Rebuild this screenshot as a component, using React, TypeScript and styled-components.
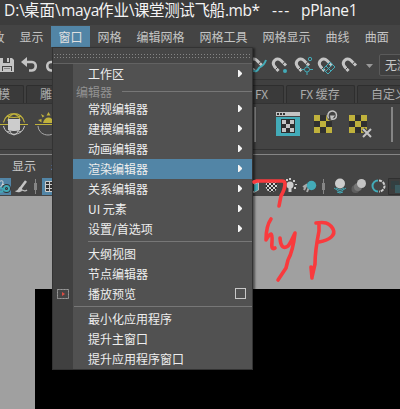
import React from "react";
import styled, { createGlobalStyle } from "styled-components";

const GlobalStyle = createGlobalStyle`
  * { box-sizing: border-box; }
  body { margin: 0; overflow: hidden; }
`;

const Window = styled.div`
  position: relative;
  width: 400px;
  height: 409px;
  overflow: hidden;
  background: #444;
  color: #c8c8c8;
  font: 12px/20px "Noto Sans CJK SC", sans-serif;
  white-space: pre;
  display: flex;
  flex-direction: column;
`;

const TitleBar = styled.header`
  height: 25px;
  flex: none;
  display: flex;
  padding-left: 4px;
  background: #3c3c3c;
  color: #f4f4f4;
  font: 15.5px/21px "Open Sans", "Noto Sans CJK SC", sans-serif;
`;

const TitlePart = styled.span<{ $w: number; $spacing?: number }>`
  width: ${(p) => p.$w}px;
  flex: none;
  letter-spacing: ${(p) => p.$spacing ?? 0}px;
`;

const MenuBar = styled.nav`
  height: 22px;
  flex: none;
  display: flex;
  padding-top: 1px;
  margin-left: -15px;
`;

const MenuBarItem = styled.span<{ $active?: boolean }>`
  flex: none;
  padding: 1px 7.5px 0;
  line-height: 20px;
  background: ${(p) => (p.$active ? "#5285a6" : "transparent")};
  color: ${(p) => (p.$active ? "#e0e0e0" : "#c4c4c4")};
`;

const Toolbar = styled.div`
  height: 33px;
  flex: none;
  display: flex;
  align-items: flex-start;
  padding-top: 10px;
  border-bottom: 1px solid #353535;
`;

const IconSlot = styled.span<{ $w: number; $gap?: number }>`
  display: block;
  flex: none;
  width: ${(p) => p.$w}px;
  margin-left: ${(p) => p.$gap ?? 0}px;
  svg { display: block; overflow: visible; }
`;

const SelectBox = styled.div`
  flex: none;
  width: 60px;
  height: 22px;
  margin: -3px 0 0 6px;
  padding-left: 5px;
  border: 1px solid #5a5a5a;
  border-radius: 2px;
  background: #3f3f3f;
  line-height: 20px;
`;

const TabRow = styled.div`
  height: 24px;
  flex: none;
  display: flex;
  align-items: flex-end;
  gap: 2px;
  margin-left: -4px;
  border-bottom: 1px solid #333;
  background: #404040;
`;

const Tab = styled.div<{ $w: number; $pad: number }>`
  flex: none;
  width: ${(p) => p.$w}px;
  height: 18px;
  padding-left: ${(p) => p.$pad}px;
  overflow: hidden;
  border: 1px solid #2e2e2e;
  border-bottom: 0;
  border-radius: 2px 2px 0 0;
  background: #3a3a3a;
  color: #aaa;
  line-height: 16px;
`;

const Shelf = styled.div`
  height: 46px;
  flex: none;
  display: flex;
  align-items: flex-start;
  padding: 8px 0 0 2px;
  border-bottom: 1px solid #333;
`;

const ShelfDivider = styled.span<{ $gap: number }>`
  flex: none;
  width: 2px;
  height: 35px;
  margin: -5px 0 0 ${(p) => p.$gap}px;
  background: #858585;
`;

const PanelMenu = styled.div`
  height: 22px;
  flex: none;
  display: flex;
  gap: 15px;
  margin-top: 4px;
  padding-left: 12px;
  border-top: 1px solid #858585;
  line-height: 21px;
`;

const PanelTools = styled.div`
  height: 20px;
  flex: none;
  display: flex;
  padding-top: 1px;
`;

const ViewportArea = styled.main`
  flex: 1;
  padding: 93px 0 0 35px;
  background: #a0a0a0;
`;

const ViewportCanvas = styled.div`
  height: 100%;
  background: #000;
`;

const Dropdown = styled.div`
  position: absolute;
  left: 52px;
  top: 47px;
  width: 201px;
  height: 323px;
  border: 1px solid #333;
  background: #515151;
  color: #eee;
  box-shadow: 2px 1px 2px rgba(0, 0, 0, 0.5);
`;

const TearOff = styled.div`
  height: 16px;
  padding: 6px 1px 0;
  border-bottom: 1px solid #626262;
  background: #464646;
  &::before {
    content: "";
    display: block;
    height: 4px;
    background: conic-gradient(from 0deg at 1px 1px, transparent 75%, #858585 0) 0 0 / 3px 3px;
  }
`;

const DropdownBody = styled.div`
  height: 305px;
  padding-left: 20px;
  background: linear-gradient(90deg, #404040 20px, transparent 20px);
`;

const Row = styled.div<{ $active?: boolean }>`
  position: relative;
  display: flex;
  justify-content: space-between;
  align-items: center;
  height: 20px;
  padding: 0 10px 1px 15px;
  line-height: 19px;
  background: ${(p) => (p.$active ? "#5285a6" : "transparent")};
  svg { display: block; }
`;

const SectionHeading = styled.div`
  display: flex;
  align-items: center;
  gap: 10px;
  height: 15px;
  padding-left: 3px;
  color: #929292;
  line-height: 15px;
  &::after {
    content: "";
    flex: 1;
    height: 1px;
    background: #777;
  }
`;

const Separator = styled.div<{ $inset: number }>`
  height: 1px;
  margin: 2px 0 2px ${(p) => p.$inset}px;
  background: #777;
`;

const OptionBox = styled.span`
  width: 11px;
  height: 11px;
  margin-right: -4px;
  border: 1px solid #c8c8c8;
`;

const RowIcon = styled.span`
  position: absolute;
  left: -16px;
  top: 5px;
`;

const Ink = styled.svg`
  position: absolute;
  left: 250px;
  top: 170px;
  pointer-events: none;
`;

const TEAL = "#43abb8";
const LIGHT = "#c4c4c4";

const Magnet = ({ kind }: { kind?: "curve" | "point" | "center" | "plane" }) => (
  <svg width="20" height="20" fill="none">
    <path d="M6.500 14 2.500 9.500C-1 4.500 5-.500 9 3.500L14 8.500" stroke={LIGHT} strokeWidth="3" />
    <path d="m3.500 12.500 2.500-2.500M10.500 7.500l2-2.500" stroke="#444" strokeWidth="1" />
    {kind === "plane" && <path d="m5 12 7-7 5 5-7 7zM8 9l5 5M14.500 7.500l-7 7" stroke={TEAL} />}
    {kind === "curve" && <path d="M4 13c4 3 6 0 7-2s4 0 7-8" stroke={TEAL} strokeWidth="2" />}
    {kind === "point" && <circle cx="13" cy="14" r="2" fill={TEAL} />}
    {kind === "center" && (
      <g stroke={TEAL}>
        <circle cx="15" cy="2" r="1.700" />
        <circle cx="12" cy="12.500" r="2.500" fill="#444" />
        <path d="M12 8v2m0 5v3m-6-5.500h3.500m5 0H18" />
      </g>
    )}
  </svg>
);

const SaveIcon = () => (
  <svg width="15" height="17">
    <path d="M0 1h12l2 2v12H0z" fill={LIGHT} />
    <path d="M3 1h7v5H3zM2 9h10v5H2z" fill="#444" />
    <path d="M7 1h2v4H7zM3 10h8v4H3z" fill={LIGHT} />
    <path d="M4 11.500h6" stroke="#888" />
  </svg>
);

const UndoIcon = ({ flip }: { flip?: boolean }) => (
  <svg width="17" height="17" fill="none">
    <g transform={flip ? "translate(17 0) scale(-1 1)" : undefined}>
      <path d="M4 5h7c5 0 5 8 0 8.500H8" stroke={LIGHT} strokeWidth="2.600" />
      <path d="m0 5 6-5v10z" fill={LIGHT} />
    </g>
  </svg>
);

const GlobeIcon = () => (
  <svg width="25" height="25" fill="none">
    <path d="M1.500 10.500C4-1.500 20-1.500 22.500 10.500M6 9c0-4 2-6 6-7 4 1 6 3 6 7M5 4c3 2 11 2 14 0" stroke="#c0b23c" strokeWidth="1.200" />
    <path d="M1.500 14c2.500 11 18.500 11 21 0M7 16c1 4 2 6 5 7 3-1 4-3 5-7M5 20c3-2 11-2 14 0" stroke="#ccc" />
    <path d="M-2 12.500h28" stroke="#c0b23c" />
    <path d="M6 7h12v11H6z" fill="#ccc" />
  </svg>
);

const SunIcon = () => (
  <svg width="26" height="25" fill="none">
    <path d="M3 14c1 12 19 12 20 0" stroke="#aaa" />
    <path d="M0 12.500h26" stroke="#c0b23c" />
    <path d="M8 11c1-7.500 10-7.500 11 0z" fill="#c0b23c" />
    <path d="m13.500 0 2 3.500h-4zM6 2l3.500 2-2 1.500zM3 8l3.500-1v3.500zM20 2l-2 3.500L20.500 5zM23 8l-3-1 1 3z" fill="#c0b23c" />
  </svg>
);

const checks = (n: number, size: number, fill: string, x = 0, y = 0) =>
  Array.from({ length: n * n }, (_, i) => i)
    .filter((i) => (Math.floor(i / n) + (i % n)) % 2 === 0)
    .map((i) => (
      <rect key={i} x={x + (i % n) * size} y={y + Math.floor(i / n) * size} width={size} height={size} fill={fill} />
    ));

const RenderWindowIcon = () => (
  <svg width="25" height="25">
    <path d="M0 0h24v4H0z" fill={LIGHT} />
    <path d="M1 1h2v2H1zM4 1h2v2H4zM7 1h2v2H7z" fill="#333" />
    <path d="M0 5h24v19H0z" fill={TEAL} />
    <path d="M5 7h14v14H5z" fill="#2e2e2e" />
    {checks(3, 4, LIGHT, 6, 8)}
  </svg>
);

const CheckerIcon = ({ mark }: { mark: "loop" | "cross" }) => (
  <svg width="24" height="27" fill="none">
    <path d="M0 3h18v18H0z" fill="#303030" />
    {checks(3, 6, "#c0b23c", 0, 3)}
    {mark === "loop" ? (
      <>
        <circle cx="18" cy="3.500" r="5.500" fill="#444" />
        <path d="M14.500 6.500C11-1 22-4 22.500 3c0 4-2.500 4.500-5 4" stroke={LIGHT} strokeWidth="1.500" />
        <path d="m16 3.500 5 0-4 5z" fill={LIGHT} />
      </>
    ) : (
      <>
        <path d="m14 17 8 8m0-8-8 8" stroke="#444" strokeWidth="4" />
        <path d="m14 17 8 8m0-8-8 8" stroke={LIGHT} strokeWidth="2" />
      </>
    )}
  </svg>
);

const CameraIcon = () => (
  <svg width="11" height="19" fill="none">
    <path d="M-7 1h18v17H-7z" fill="#5285a6" />
    <path d="M-1 5c4-3 5 0 3 3m-3 4 4-5 3 2" stroke="#ddd" />
    <circle cx="6.500" cy="11.500" r="2.500" stroke="#333" strokeWidth="4" />
    <circle cx="6.500" cy="11.500" r="2.500" stroke={TEAL} strokeWidth="2" />
    <circle cx="1" cy="13" r="2" stroke={TEAL} strokeWidth="1.500" />
  </svg>
);

const BrushIcon = () => (
  <svg width="13" height="18" fill="none">
    <path d="M11 4 5 12" stroke="#c4c4c4" strokeWidth="2.500" />
    <path d="M5 10c3 1 3 4 0 5s-5-1-5-1c3 0 3-3 5-4z" fill="#c4c4c4" />
    <path d="M6 14c2-3 3 2 6-1" stroke="#bbb" strokeWidth="1.200" />
  </svg>
);

const BarIcon = () => (
  <svg width="3" height="18">
    <path d="M1 2h1v15H1zM0 6h3v7H0z" fill="#858585" />
  </svg>
);

const GridIcon = () => (
  <svg width="20" height="19" fill="none">
    <path d="M0 1h20v17H0z" fill="#5285a6" />
    <path d="M3.500 4.500h14v10h-14zM3.500 7.500h14M3.500 11.500h14M7.500 4.500v10M12.500 4.500v10" fill="#333" stroke="#ccc" />
  </svg>
);

const CubeIcon = () => (
  <svg width="12" height="18">
    <path d="m0 5 7-2 3 1v9l-5 3-5-2z" fill="#bbb" />
    <path d="m0 6 5 1v7l-5-1z" fill="#333" />
    <path d="m5 8 4-2v7l-4 2z" fill={TEAL} />
  </svg>
);

const CheckerBall = () => (
  <svg width="13" height="18">
    <defs>
      <clipPath id="ball"><circle cx="6.500" cy="9" r="6" /></clipPath>
    </defs>
    <g clipPath="url(#ball)">
      <path d="M0 2h13v14H0z" fill="#2f2f2f" />
      {checks(7, 2, "#d4d4d4", 0, 2)}
    </g>
  </svg>
);

const BulbIcon = () => (
  <svg width="12" height="18">
    <circle cx="4" cy="8" r="3.500" fill="#ccc" />
    <path d="M2.500 10h3v5h-3zM0 2h2v2H0zM3 1h2v2H3zM7 3h2v2H7zM9 7h2v1H9zM8 10h2v2H8z" fill="#ccc" />
  </svg>
);

const MotionIcon = () => (
  <svg width="15" height="18" fill="none">
    <path d="m1 10 3-2m-2 5 3-6m0 8 2-5" stroke="#aaa" strokeWidth="2" />
    <circle cx="9.500" cy="8.500" r="4.700" fill={TEAL} />
  </svg>
);

const OcclusionIcon = () => (
  <svg width="13" height="18" fill="none">
    <path d="m0 11 6 4 6-4m-10 0 4 2 4-2m-7 4 3 1 3-1" stroke={TEAL} />
    <circle cx="6" cy="6.500" r="5" fill="#ccc" />
  </svg>
);

const BlurBallIcon = () => (
  <svg width="15" height="18">
    <circle cx="3.500" cy="12" r="4" fill="#5e5e5e" />
    <circle cx="6" cy="10" r="4" fill="#777" />
    <circle cx="9.500" cy="6.500" r="4.500" fill="#c4c4c4" />
  </svg>
);

const RingIcon = () => (
  <svg width="13" height="18" fill="none">
    <path d="M6 3.500a5.500 5.500 0 0 0 0 11" stroke={TEAL} strokeWidth="2" />
    <path d="M7 3.500a5.500 5.500 0 0 1 0 11" stroke="#ccc" strokeWidth="2" strokeDasharray="3 1" />
  </svg>
);

const LayersIcon = () => (
  <svg width="14" height="19">
    <path d="M.5 1.500h18v16H.5z" fill="#3d3d3d" stroke="#303030" />
    <path d="M3 4h8v8H3z" fill="#333f41" />
    <path d="M7 8h8v8H7z" fill="#3b5b60" />
  </svg>
);

const Arrow = () => (
  <svg width="4" height="7">
    <path d="M0 0h1l3 3v1L1 7H0z" fill="#f4f4f4" />
  </svg>
);

const FilmIcon = () => (
  <svg width="12" height="10">
    <path d="M.5.500h11v9H.5z" fill="#464646" stroke="#777" />
    <path d="M.5.500h11v9H.5z" fill="none" stroke="#999" strokeDasharray="2 1" />
    <path d="m5 3 3 2-3 2z" fill="#e04d43" />
  </svg>
);

const menus = ["显示", "窗口", "网格", "编辑网格", "网格工具", "网格显示", "曲线", "曲面"];
const editors = ["常规编辑器", "建模编辑器", "动画编辑器", "渲染编辑器", "关系编辑器", "UI 元素", "设置/首选项"];

const SubmenuRow = ({ label, active }: { label: string; active?: boolean }) => (
  <Row $active={active}>
    {label}
    <Arrow />
  </Row>
);

export default function App() {
  return (
    <Window>
      <GlobalStyle />
      <TitleBar>
        <TitlePart $w={20}>D:\</TitlePart>
        <TitlePart $w={31}>桌面</TitlePart>
        <TitlePart $w={6}>\</TitlePart>
        <TitlePart $w={37} $spacing={-0.3}>maya</TitlePart>
        <TitlePart $w={31}>作业</TitlePart>
        <TitlePart $w={5}>\</TitlePart>
        <TitlePart $w={91} $spacing={-0.4}>课堂测试飞船</TitlePart>
        <TitlePart $w={47} $spacing={-0.5}>.mb*</TitlePart>
        <TitlePart $w={29} $spacing={1.1}>---</TitlePart>
        <TitlePart $w={60} $spacing={-0.3}>pPlane1</TitlePart>
      </TitleBar>
      <MenuBar>
        <MenuBarItem>改</MenuBarItem>
        {menus.map((m) => (
          <MenuBarItem key={m} $active={m === "窗口"}>{m}</MenuBarItem>
        ))}
      </MenuBar>
      <Toolbar>
        <IconSlot $w={15}><SaveIcon /></IconSlot>
        <IconSlot $w={17} $gap={6}><UndoIcon /></IconSlot>
        <IconSlot $w={17} $gap={7}><UndoIcon flip /></IconSlot>
        <IconSlot $w={20} $gap={186}><Magnet kind="curve" /></IconSlot>
        <IconSlot $w={20} $gap={4}><Magnet kind="point" /></IconSlot>
        <IconSlot $w={20} $gap={3}><Magnet kind="center" /></IconSlot>
        <IconSlot $w={20} $gap={3}><Magnet kind="plane" /></IconSlot>
        <IconSlot $w={20} $gap={4}><Magnet /></IconSlot>
        <IconSlot $w={7} $gap={4}>
          <svg width="7" height="12"><path d="M0 7h7l-3.500 4z" fill="#999" /></svg>
        </IconSlot>
        <SelectBox>无激</SelectBox>
      </Toolbar>
      <TabRow>
        <Tab $w={28} $pad={1}>模</Tab>
        <Tab $w={60} $pad={13}>雕</Tab>
        <Tab $w={134} $pad={10} />
        <Tab $w={60} $pad={30}>FX</Tab>
        <Tab $w={69} $pad={13}>FX 缓存</Tab>
        <Tab $w={80} $pad={13}>自定义</Tab>
      </TabRow>
      <Shelf>
        <IconSlot $w={25}><GlobeIcon /></IconSlot>
        <IconSlot $w={26} $gap={8}><SunIcon /></IconSlot>
        <ShelfDivider $gap={193} />
        <IconSlot $w={25} $gap={20}><RenderWindowIcon /></IconSlot>
        <IconSlot $w={24} $gap={13}><CheckerIcon mark="loop" /></IconSlot>
        <IconSlot $w={24} $gap={11}><CheckerIcon mark="cross" /></IconSlot>
        <ShelfDivider $gap={18} />
      </Shelf>
      <PanelMenu><span>显示</span><span>着</span></PanelMenu>
      <PanelTools>
        <IconSlot $w={11}><CameraIcon /></IconSlot>
        <IconSlot $w={13} $gap={4}><BrushIcon /></IconSlot>
        <IconSlot $w={3} $gap={6}><BarIcon /></IconSlot>
        <IconSlot $w={20} $gap={5}><GridIcon /></IconSlot>
        <IconSlot $w={12} $gap={187}><CubeIcon /></IconSlot>
        <IconSlot $w={13} $gap={4}><CheckerBall /></IconSlot>
        <IconSlot $w={12} $gap={8}><BulbIcon /></IconSlot>
        <IconSlot $w={15} $gap={4}><MotionIcon /></IconSlot>
        <IconSlot $w={3} $gap={5}><BarIcon /></IconSlot>
        <IconSlot $w={13} $gap={9}><OcclusionIcon /></IconSlot>
        <IconSlot $w={15} $gap={5}><BlurBallIcon /></IconSlot>
        <IconSlot $w={13} $gap={5}><RingIcon /></IconSlot>
        <IconSlot $w={14} $gap={3}><LayersIcon /></IconSlot>
      </PanelTools>
      <ViewportArea><ViewportCanvas /></ViewportArea>
      <Dropdown>
        <TearOff />
        <DropdownBody>
          <SubmenuRow label="工作区" />
          <SectionHeading>编辑器</SectionHeading>
          {editors.map((e) => <SubmenuRow key={e} label={e} active={e === "渲染编辑器"} />)}
          <Separator $inset={15} />
          <Row>大纲视图</Row>
          <Row>节点编辑器</Row>
          <Row><RowIcon><FilmIcon /></RowIcon>播放预览<OptionBox /></Row>
          <Separator $inset={1} />
          <Row>最小化应用程序</Row>
          <Row>提升主窗口</Row>
          <Row>提升应用程序窗口</Row>
        </DropdownBody>
      </Dropdown>
      <Ink width="120" height="120" fill="none" stroke="#f93a3d" strokeWidth="3.600" strokeLinecap="round" strokeLinejoin="round">
        <path d="M4 12 7 11h25q3 0 3 3 0 5-4 12l-2 10" />
        <path d="M21 49q-5 7-5 21 7-13 6 2-1 9 3 6M30 68q1 13 8 8 2-2 7-13-2 18-7 27l-2 8-8 12" />
        <path d="M69 53v8q-4 20-4 33l-3 13M61 97l1 11M66 53c8-1 13-1 17 6 3 6-3 11-14 13" />
      </Ink>
    </Window>
  );
}
